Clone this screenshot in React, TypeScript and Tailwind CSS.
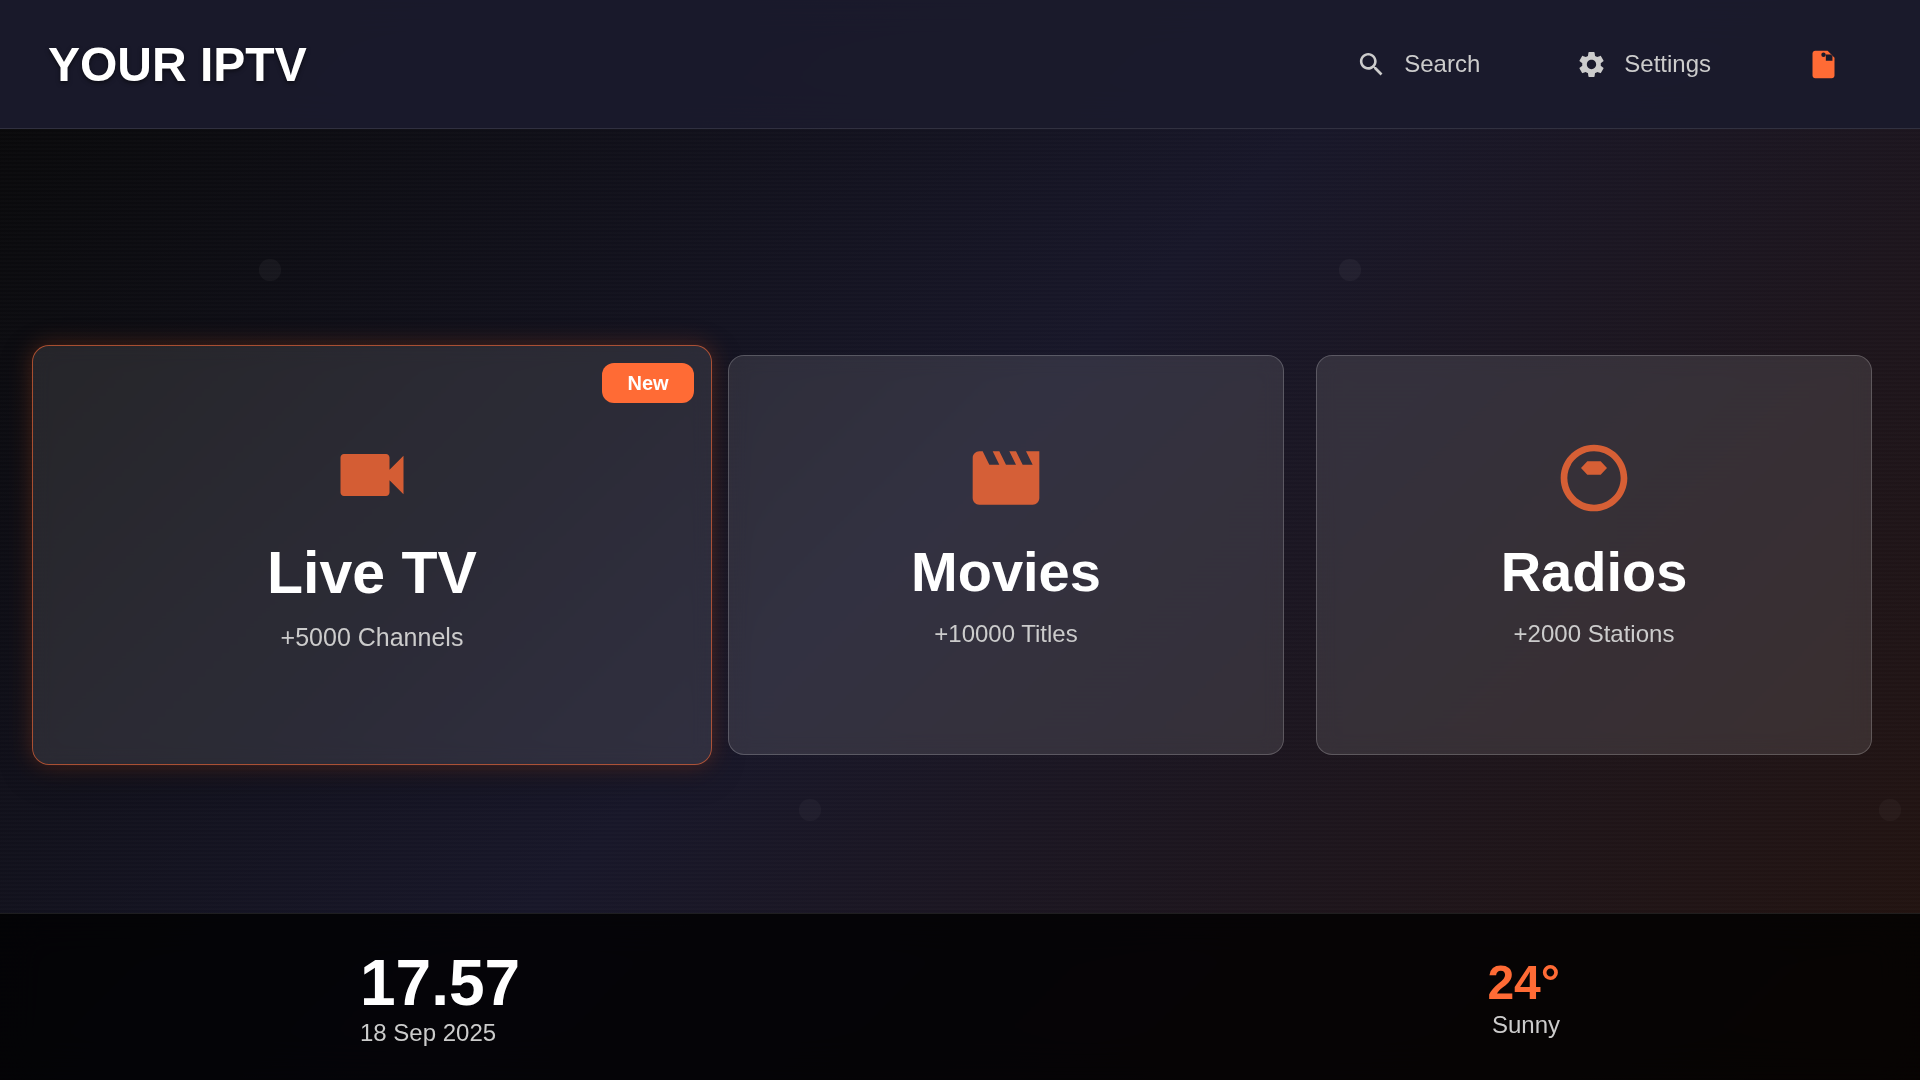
import type { ReactNode } from "react";

const Icon = ({ children, className }: { children: ReactNode; className: string }) => (
  <svg viewBox="0 0 24 24" fill="currentColor" aria-hidden="true" className={className}>
    {children}
  </svg>
);

const icons = {
  search: (
    <path d="M15.5 14h-.79l-.28-.27C15.41 12.59 16 11.11 16 9.5 16 5.91 13.09 3 9.5 3S3 5.91 3 9.5 5.91 16 9.5 16c1.61 0 3.09-.59 4.23-1.57l.27.28v.79l5 4.99L20.49 19l-4.99-5zm-6 0C7.01 14 5 11.99 5 9.5S7.01 5 9.5 5 14 7.01 14 9.5 11.99 14 9.5 14z" />
  ),
  settings: (
    <path d="M19.14 12.94c.04-.3.06-.61.06-.94 0-.32-.02-.64-.07-.94l2.03-1.58c.18-.14.23-.41.12-.61l-1.92-3.32c-.12-.22-.37-.29-.59-.22l-2.39.96c-.5-.38-1.03-.7-1.62-.94l-.36-2.54c-.04-.24-.24-.41-.48-.41h-3.84c-.24 0-.43.17-.47.41l-.36 2.54c-.59.24-1.13.57-1.62.94l-2.39-.96c-.22-.08-.47 0-.59.22L2.74 8.87c-.12.21-.08.47.12.61l2.03 1.58c-.05.3-.09.63-.09.94s.02.64.07.94l-2.03 1.58c-.18.14-.23.41-.12.61l1.92 3.32c.12.22.37.29.59.22l2.39-.96c.5.38 1.03.7 1.62.94l.36 2.54c.05.24.24.41.48.41h3.84c.24 0 .44-.17.47-.41l.36-2.54c.59-.24 1.13-.56 1.62-.94l2.39.96c.22.08.47 0 .59-.22l1.92-3.32c.12-.22.07-.47-.12-.61l-2.01-1.58zM12 15.6c-1.98 0-3.6-1.62-3.6-3.6s1.62-3.6 3.6-3.6 3.6 1.62 3.6 3.6-1.62 3.6-3.6 3.6z" />
  ),
  file: (
    <path
      fillRule="evenodd"
      d="M6 2h9l5 5v13c0 1.100-.9 2-2 2H6c-1.100 0-2-.9-2-2V4c0-1.100.9-2 2-2zM12 3.300a1.600 1.600 0 1 0 0 3.200a1.600 1.600 0 1 0 0-3.200zM13.700 4.700V9.300h4.800V5.900l-1.200-1.200z"
    />
  ),
  camera: (
    <path d="M17 10.500V7c0-.55-.45-1-1-1H4c-.55 0-1 .45-1 1v10c0 .55.45 1 1 1h12c.55 0 1-.45 1-1v-3.500l4 4v-11l-4 4z" />
  ),
  movie: (
    <path d="M18 4l2 4h-3l-2-4h-2l2 4h-3l-2-4H8l2 4H7L5 4H4c-1.100 0-1.990.9-1.990 2L2 18c0 1.100.9 2 2 2h16c1.100 0 2-.9 2-2V4h-4z" />
  ),
  radio: (
    <path d="M12 2C6.480 2 2 6.480 2 12s4.480 10 10 10 10-4.480 10-10S17.520 2 12 2zm0 18c-4.410 0-8-3.590-8-8s3.590-8 8-8 8 3.590 8 8-3.590 8-8 8zM10 7h4l1.900 2L14 11h-4L8.100 9z" />
  ),
};

const Header = () => {
  return (
    <header className="flex h-[129px] shrink-0 items-center justify-between border-b border-white/10 bg-[#1a1a2c]/95 px-12 backdrop-blur-[20px]">
      <h1 className="pt-0.5 text-5xl font-bold text-white [text-shadow:0_2px_4px_rgba(0,0,0,0.5)]">YOUR IPTV</h1>
      <nav className="flex items-center gap-8 text-2xl text-[#cccccc]">
        <button type="button" className="flex items-center gap-[17px] px-8 py-4">
          <Icon className="size-[31px]">{icons.search}</Icon>
          Search
        </button>
        <button type="button" className="flex items-center gap-[17px] px-8 py-4">
          <Icon className="size-[31px]">{icons.settings}</Icon>
          Settings
        </button>
        <button type="button" aria-label="Playlist" className="px-8 py-4 text-[#ff6b35]">
          <Icon className="size-[33px]">{icons.file}</Icon>
        </button>
      </nav>
    </header>
  );
};

const cards = [
  { title: "Movies", subtitle: "+10000 Titles", icon: icons.movie },
  { title: "Radios", subtitle: "+2000 Stations", icon: icons.radio },
];

const App = () => {
  return (
    <div className="relative isolate flex min-h-screen flex-col overflow-hidden bg-[linear-gradient(135deg,#080808_0%,#181729_48%,#23130e_100%)] font-['Liberation_Sans',Arial,sans-serif]">
      <svg className="absolute inset-0 -z-10 h-full w-full" aria-hidden="true">
        <defs>
          <pattern id="dots" width="1080" height="1080" patternUnits="userSpaceOnUse">
            <circle cx="270" cy="270" r="11" fill="#fff" fillOpacity="0.04" />
            <circle cx="810" cy="810" r="11" fill="#fff" fillOpacity="0.03" />
          </pattern>
        </defs>
        <rect width="100%" height="100%" fill="url(#dots)" />
      </svg>
      <div className="absolute inset-0 -z-10 bg-[repeating-linear-gradient(0deg,transparent_0px,transparent_2px,rgba(255,255,255,0.01)_2px,rgba(255,255,255,0.01)_4px)]" />

      <Header />

      <main className="grid flex-1 grid-cols-[648fr_556fr_556fr] items-center gap-8 px-12 pt-17">
        <button
          type="button"
          className="relative -mx-4 flex h-[420px] flex-col items-center justify-center rounded-[17px] border border-[#ff6b35]/60 bg-white/10 pb-[26px] shadow-[0_0_21px_rgba(255,107,53,0.25),0_8px_34px_rgba(0,0,0,0.3)] backdrop-blur-[10px]"
        >
          <span className="absolute top-[17px] right-[17px] flex h-10 w-[92px] items-center justify-center rounded-xl bg-[#ff6b35] pb-px text-[20px] font-bold text-white">
            New
          </span>
          <Icon className="mb-[22px] size-[84px] text-[#ff6b35] opacity-80">{icons.camera}</Icon>
          <span className="mb-4 text-[59px] leading-[68px] font-bold text-white">Live TV</span>
          <span className="text-[25px] leading-7 text-[#cccccc]">+5000 Channels</span>
        </button>
        {cards.map((card) => (
          <button
            key={card.title}
            type="button"
            className="flex h-[400px] flex-col items-center justify-center rounded-2xl border border-white/20 bg-white/11 pb-6 backdrop-blur-[10px]"
          >
            <Icon className="mb-[22px] size-20 text-[#ff6b35] opacity-80">{card.icon}</Icon>
            <span className="mb-4 text-[56px] leading-[64px] font-bold text-white">{card.title}</span>
            <span className="text-2xl leading-7 text-[#cccccc]">{card.subtitle}</span>
          </button>
        ))}
      </main>

      <footer className="flex h-[167px] shrink-0 items-center border-t border-white/10 bg-black/80 backdrop-blur-[20px]">
        <div className="mx-auto flex w-full max-w-[1200px] items-center justify-between pt-1">
          <div>
            <p className="text-[64px] leading-[64px] font-bold text-white">17.57</p>
            <p className="mt-1 text-2xl leading-7 text-[#cccccc]">18 Sep 2025</p>
          </div>
          <div className="text-right">
            <p className="text-5xl leading-[48px] font-bold text-[#ff6b35]">24°</p>
            <p className="mt-1 text-2xl leading-7 text-[#cccccc]">Sunny</p>
          </div>
        </div>
      </footer>
    </div>
  );
};

export default App;
